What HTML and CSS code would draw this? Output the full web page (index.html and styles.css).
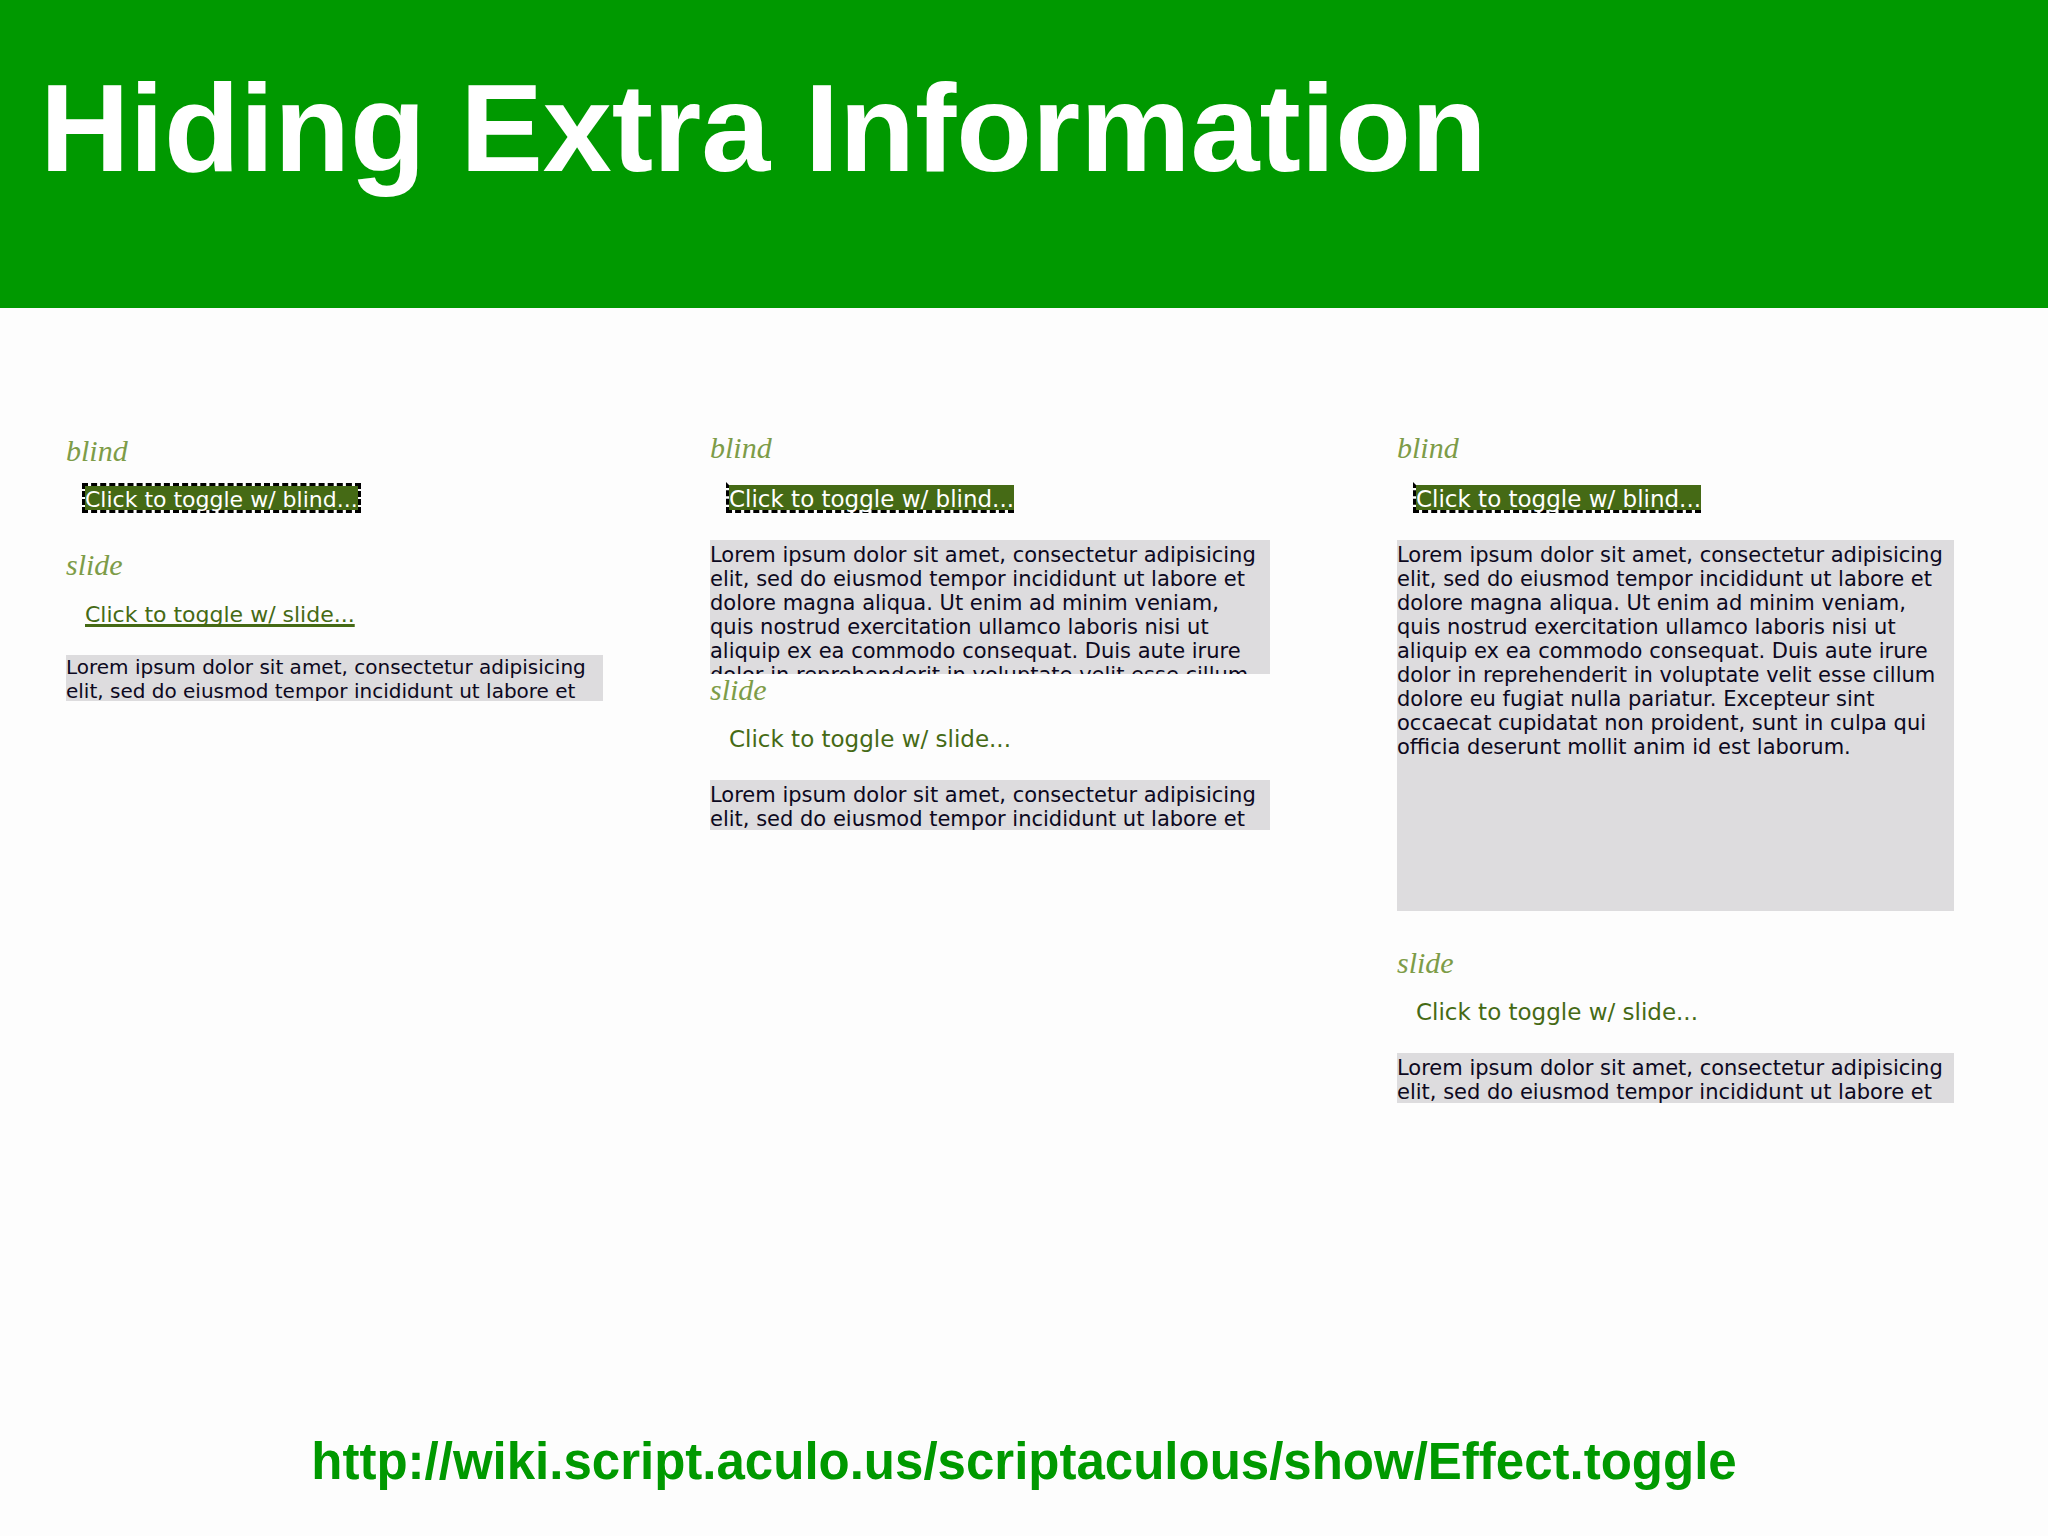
FILE: index.html
```html
<!DOCTYPE html>
<html lang="en">
<head>
<meta charset="utf-8">
<title>Hiding Extra Information</title>
<link rel="stylesheet" href="styles.css">
</head>
<body>
<header class="banner">
  <h1 class="title">Hiding Extra Information</h1>
</header>
<main class="demos">
  <section class="demo demo-closed">
    <h2 class="effect">blind</h2>
    <a class="toggle toggle-focus toggle-ring" href="#">Click to toggle w/ blind...</a>
    <h2 class="effect effect-next">slide</h2>
    <a class="toggle toggle-underlined" href="#">Click to toggle w/ slide...</a>
    <p class="panel panel-peek">Lorem ipsum dolor sit amet, consectetur adipisicing elit, sed do eiusmod tempor incididunt ut labore et</p>
  </section>
  <section class="demo demo-opening">
    <h2 class="effect">blind</h2>
    <a class="toggle toggle-focus" href="#">Click to toggle w/ blind...</a>
    <p class="panel panel-partial">Lorem ipsum dolor sit amet, consectetur adipisicing elit, sed do eiusmod tempor incididunt ut labore et dolore magna aliqua. Ut enim ad minim veniam, quis nostrud exercitation ullamco laboris nisi ut aliquip ex ea commodo consequat. Duis aute irure dolor in reprehenderit in voluptate velit esse cillum</p>
    <h2 class="effect">slide</h2>
    <a class="toggle" href="#">Click to toggle w/ slide...</a>
    <p class="panel panel-peek">Lorem ipsum dolor sit amet, consectetur adipisicing elit, sed do eiusmod tempor incididunt ut labore et</p>
  </section>
  <section class="demo demo-open">
    <h2 class="effect">blind</h2>
    <a class="toggle toggle-focus" href="#">Click to toggle w/ blind...</a>
    <p class="panel panel-full">Lorem ipsum dolor sit amet, consectetur adipisicing elit, sed do eiusmod tempor incididunt ut labore et dolore magna aliqua. Ut enim ad minim veniam, quis nostrud exercitation ullamco laboris nisi ut aliquip ex ea commodo consequat. Duis aute irure dolor in reprehenderit in voluptate velit esse cillum dolore eu fugiat nulla pariatur. Excepteur sint occaecat cupidatat non proident, sunt in culpa qui officia deserunt mollit anim id est laborum.</p>
    <h2 class="effect effect-next">slide</h2>
    <a class="toggle" href="#">Click to toggle w/ slide...</a>
    <p class="panel panel-peek">Lorem ipsum dolor sit amet, consectetur adipisicing elit, sed do eiusmod tempor incididunt ut labore et</p>
  </section>
</main>
<footer class="source">
  <a class="source-link" href="http://wiki.script.aculo.us/scriptaculous/show/Effect.toggle">http://wiki.script.aculo.us/scriptaculous/show/Effect.toggle</a>
</footer>
</body>
</html>
```
FILE: styles.css
```css
* {
  box-sizing: border-box;
}

body {
  margin: 0;
  min-height: 100vh;
  display: flex;
  flex-direction: column;
  background: #fdfdfd;
  font-family: "DejaVu Sans", Verdana, sans-serif;
}

.banner {
  padding: 56px 40px 108px;
  background: #009900;
}

.title {
  margin: 0;
  color: #fff;
  font: bold 124px/144px "Arial Rounded MT Bold", "Liberation Sans", Arial, sans-serif;
}

.demos {
  flex: 1;
  display: grid;
  grid-template-columns: 644fr 687fr 557fr;
  align-items: start;
  padding: 124px 94px 0 66px;
}

.demo {
  display: flex;
  flex-direction: column;
  align-items: flex-start;
}

.demo-closed {
  padding: 3px 107px 0 0;
}

.demo-opening {
  padding-right: 127px;
}

.effect {
  margin: 0;
  color: #7d9c48;
  font: italic 30px/32px "Liberation Serif", Georgia, serif;
}

.effect-next {
  margin-top: 36px;
}

.toggle {
  margin: 16px 0 0 16px;
  padding-top: 4px;
  border: 3px solid transparent;
  border-right-width: 0;
  color: #456a15;
  font-size: 23px;
  line-height: 21px;
  text-decoration: none;
  white-space: nowrap;
}

.toggle-focus {
  margin-top: 18px;
  border-left: 3px dashed #000;
  border-bottom: 3px dashed #000;
  background: #456a15 padding-box;
  color: #fff;
}

.toggle-ring {
  margin-top: 16px;
  padding-top: 3px;
  border: 3px dashed #000;
}

.toggle-underlined {
  text-decoration: underline;
  text-decoration-thickness: 3px;
  text-decoration-skip-ink: none;
}

.panel {
  width: 100%;
  margin: 27px 0 0;
  padding: 3px 8px 0 0;
  overflow: hidden;
  background: #dddcde;
  color: #0c0820;
  font-size: 21px;
  line-height: 24px;
}

.demo-closed .toggle {
  font-size: 22px;
}

.demo-closed .panel {
  padding-top: 0;
  font-size: 20px;
}

.panel-peek {
  height: 50px;
}

.demo-closed .panel-peek {
  height: 46px;
}

.panel-partial {
  height: 134px;
}

.panel-full {
  height: 371px;
}

.source {
  padding: 0 40px 40px;
  text-align: center;
}

.source-link {
  color: #009900;
  font: bold 51px/68px "Arial Rounded MT Bold", "Liberation Sans", Arial, sans-serif;
  text-decoration: none;
}
```
